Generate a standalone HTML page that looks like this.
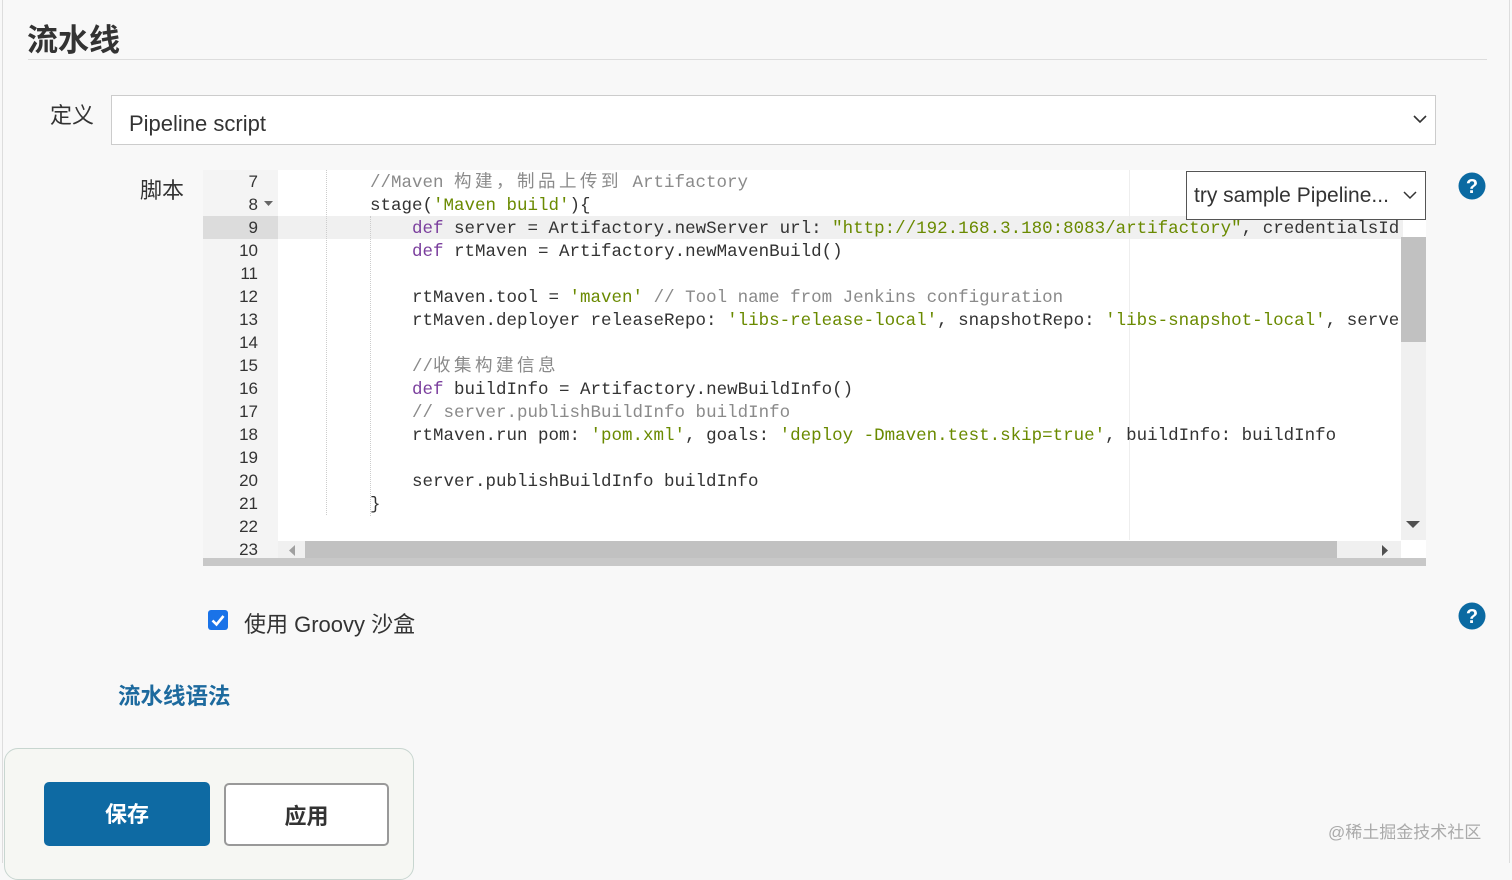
<!DOCTYPE html>
<html><head><meta charset="utf-8"><style>
body{margin:0;width:1512px;height:863px;background:#f8f8f8;position:relative;overflow:hidden;font-family:"Liberation Sans","Noto Sans CJK SC",sans-serif;color:#333}
.a{position:absolute}
.code{position:absolute;left:0;top:2px;white-space:pre;font-family:"Liberation Mono","Noto Sans CJK SC",monospace;font-size:17.5px;line-height:23px;color:#333}
.k{color:#7a3e9d}.s{color:#6a8a00}.c{color:#8a8a8a}
.z{letter-spacing:3.5px}
.ln{position:absolute;width:55px;text-align:right;font-family:"Liberation Sans",sans-serif;font-size:17px;line-height:23px;color:#333}
.g{position:absolute;width:0;border-left:1px dotted #ccc}
</style></head><body>
<div class="a" style="left:2px;top:0;width:1px;height:863px;background:#ddd"></div>
<div class="a" style="left:1509px;top:0;width:1px;height:863px;background:#ddd"></div>
<div class="a" style="left:27px;top:15px;font-size:31px;font-weight:bold;color:#333">流水线</div>
<div class="a" style="left:28px;top:59px;width:1459px;height:1px;background:#ddd"></div>
<div class="a" style="left:50px;top:98px;font-size:22px">定义</div>
<div class="a" style="left:111px;top:95px;width:1323px;height:48px;background:#fff;border:1px solid #ccc"></div>
<div class="a" style="left:129px;top:111px;font-size:22px;color:#333">Pipeline script</div>
<svg class="a" style="left:1412px;top:113px" width="16" height="12"><path d="M2 3 L8 9 L14 3" fill="none" stroke="#333" stroke-width="1.6"/></svg>
<div class="a" style="left:140px;top:173px;font-size:22px">脚本</div>

<div class="a" style="left:203px;top:170px;width:1223px;height:396px;background:#fff;overflow:hidden">
 <div class="a" style="left:0;top:0;width:75px;height:396px;background:#f4f4f4"></div>
 <div class="a" style="left:0;top:46px;width:75px;height:23px;background:#dcdcdc"></div>
 <div class="a" style="left:75px;top:46px;width:1125px;height:23px;background:#f0f0f0"></div>
 <div class="g" style="left:123px;top:0;height:345px"></div>
 <div class="g" style="left:167px;top:46px;height:300px"></div>
 <div class="a" style="left:926px;top:0;width:1px;height:370px;background:#eee"></div>
 <div class="ln" style="top:0;left:0">7<br>8<br>9<br>10<br>11<br>12<br>13<br>14<br>15<br>16<br>17<br>18<br>19<br>20<br>21<br>22<br>23</div>
 <svg class="a" style="left:61px;top:31px" width="9" height="6"><path d="M0 0H9L4.5 5Z" fill="#666"/></svg>
 <div class="a" style="left:167px;top:0;width:1030px;height:370px;overflow:hidden"><div class="code"><span class="c">//Maven <span class="z">构建，制品上传到</span> Artifactory</span>
stage(<span class="s">'Maven build'</span>){
    <span class="k">def</span> server = Artifactory.newServer url: <span class="s">"http://192.168.3.180:8083/artifactory"</span>, credentialsId
    <span class="k">def</span> rtMaven = Artifactory.newMavenBuild()

    rtMaven.tool = <span class="s">'maven'</span> <span class="c">// Tool name from Jenkins configuration</span>
    rtMaven.deployer releaseRepo: <span class="s">'libs-release-local'</span>, snapshotRepo: <span class="s">'libs-snapshot-local'</span>, server: server

    <span class="c">//<span class="z">收集构建信息</span></span>
    <span class="k">def</span> buildInfo = Artifactory.newBuildInfo()
    <span class="c">// server.publishBuildInfo buildInfo</span>
    rtMaven.run pom: <span class="s">'pom.xml'</span>, goals: <span class="s">'deploy -Dmaven.test.skip=true'</span>, buildInfo: buildInfo

    server.publishBuildInfo buildInfo
}</div></div>
 <div class="a" style="left:1198px;top:67px;width:25px;height:303px;background:#f0f0f0"></div>
 <div class="a" style="left:1198px;top:67px;width:25px;height:105px;background:#c1c1c1"></div>
 <svg class="a" style="left:1203px;top:351px" width="14" height="8"><path d="M0 0H14L7 7Z" fill="#505050"/></svg>
 <div class="a" style="left:75px;top:371px;width:1123px;height:17px;background:#f0f0f0"></div>
 <div class="a" style="left:102px;top:371px;width:1032px;height:17px;background:#c1c1c1"></div>
 <svg class="a" style="left:85px;top:375px" width="8" height="12"><path d="M7 0V11L1 5.5Z" fill="#a0a0a0"/></svg>
 <svg class="a" style="left:1178px;top:375px" width="8" height="12"><path d="M1 0V11L7 5.5Z" fill="#505050"/></svg>
 <div class="a" style="left:0;top:388px;width:1223px;height:8px;background:#c8c8c8"></div>
</div>

<div class="a" style="left:1186px;top:171px;width:238px;height:47px;background:#fff;border:1px solid #555"></div>
<div class="a" style="left:1194px;top:184px;font-size:21px;color:#333">try sample Pipeline...</div>
<svg class="a" style="left:1403px;top:190px" width="14" height="10"><path d="M1 2L7 8L13 2" fill="none" stroke="#333" stroke-width="1.5"/></svg>

<svg class="a" style="left:1458px;top:172px" width="28" height="28"><circle cx="14" cy="14" r="13.5" fill="#0b6aa2"/><text x="14" y="21" text-anchor="middle" font-family="Liberation Sans" font-weight="bold" font-size="20" fill="#fff">?</text></svg>
<svg class="a" style="left:1458px;top:602px" width="28" height="28"><circle cx="14" cy="14" r="13.5" fill="#0b6aa2"/><text x="14" y="21" text-anchor="middle" font-family="Liberation Sans" font-weight="bold" font-size="20" fill="#fff">?</text></svg>

<div class="a" style="left:208px;top:610px;width:20px;height:20px;border-radius:3px;background:#1a73e8"></div>
<svg class="a" style="left:208px;top:610px" width="20" height="20"><path d="M4.5 10.5L8.5 14.5L15.5 6" fill="none" stroke="#fff" stroke-width="2.6"/></svg>
<div class="a" style="left:244px;top:607px;font-size:22px;color:#333">使用 Groovy 沙盒</div>
<div class="a" style="left:118px;top:679px;font-size:22.5px;font-weight:bold;color:#1d6a9e">流水线语法</div>

<div class="a" style="left:4px;top:748px;width:408px;height:130px;background:#f6f7f3;border:1px solid #c8d6d0;border-radius:14px"></div>
<div class="a" style="left:44px;top:782px;width:166px;height:64px;background:#0e6aa3;border-radius:5px;color:#fff;font-size:22px;font-weight:bold;text-align:center;line-height:66px">保存</div>
<div class="a" style="left:224px;top:783px;width:161px;height:59px;background:#fff;border:2px solid #999;border-radius:5px;color:#333;font-size:22px;font-weight:bold;text-align:center;line-height:63px">应用</div>
<div class="a" style="left:1328px;top:818px;font-size:17px;color:#aaa">@稀土掘金技术社区</div>
</body></html>
